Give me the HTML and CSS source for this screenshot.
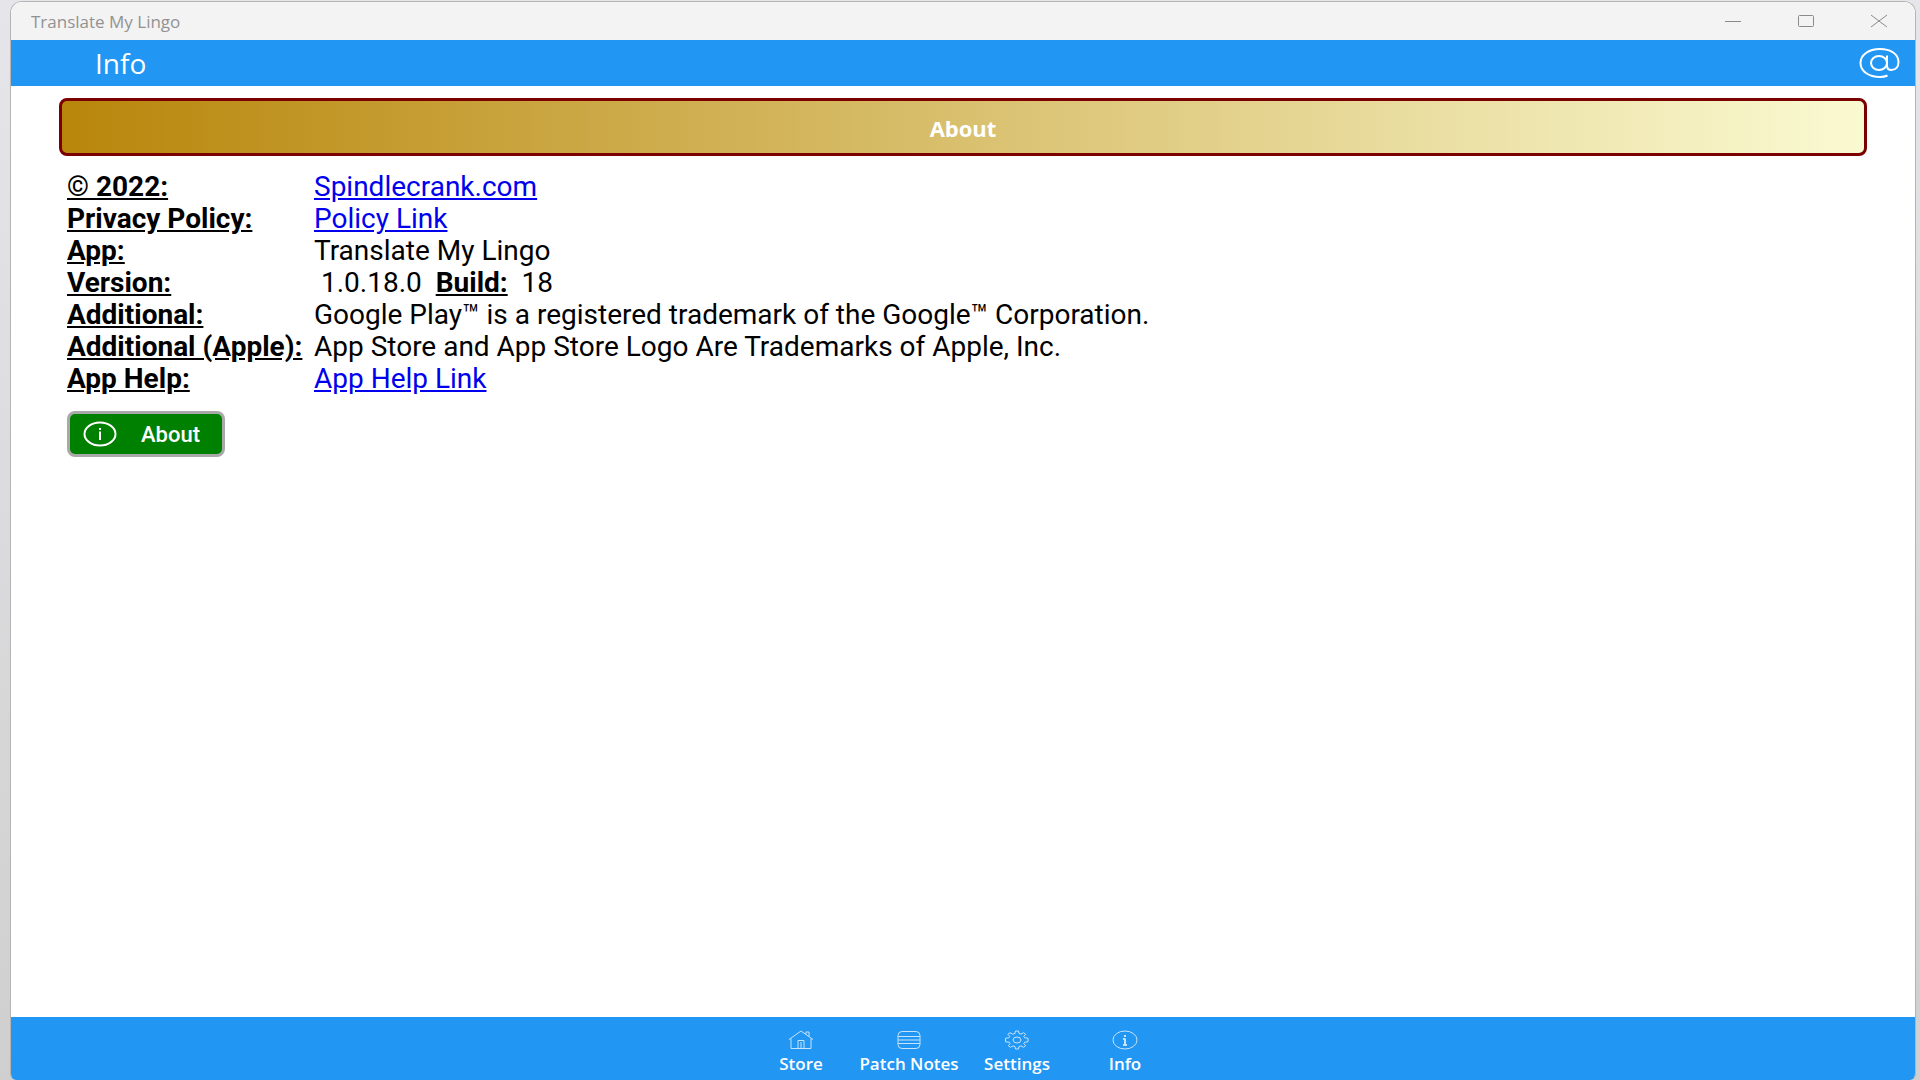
FILE: index.html
```html
<!DOCTYPE html>
<html lang="en">
<head>
    <meta charset="UTF-8">
    <meta name="viewport" content="width=device-width, initial-scale=1.0">
    <title>Translate My Lingo</title>
    <link rel="stylesheet" href="styles.css">
</head>
<body>
    <div class="window">
        <!-- Title bar -->
        <div class="title-bar">
            <span class="title">Translate My Lingo</span>
            <div class="window-controls">
                <button type="button" aria-label="Minimize">
                    <svg width="18" height="14" viewBox="0 0 18 14"><path d="M1 7.500h16"/></svg>
                </button>
                <button type="button" aria-label="Maximize">
                    <svg width="18" height="14" viewBox="0 0 18 14"><rect x="1.500" y="1.500" width="15" height="11" rx="1"/></svg>
                </button>
                <button type="button" aria-label="Close">
                    <svg width="18" height="14" viewBox="0 0 18 14"><path d="M1 1l16 12M17 1L1 13"/></svg>
                </button>
            </div>
        </div>

        <!-- Page header -->
        <header class="header">
            <h1>Info</h1>
            <button type="button" class="contact" aria-label="Contact">
                <svg width="42" height="32" viewBox="0 0 42 32">
                    <ellipse cx="20" cy="16" rx="8" ry="7"/>
                    <path d="M28 8.500v10c0 3.500 2 4.500 4.500 4.500 4.500 0 7-3.500 7-8C39.500 7 31.500 2 21 2 9.500 2 1.500 8 1.500 16S9.500 30 21 30c3 0 5.500-.5 7.500-1.500"/>
                </svg>
            </button>
        </header>

        <main class="content">
            <h2 class="banner">About</h2>

            <table class="info-table">
                <tbody>
                    <tr>
                        <th scope="row">© 2022:</th>
                        <td><a href="#spindlecrank">Spindlecrank.com</a></td>
                    </tr>
                    <tr>
                        <th scope="row">Privacy Policy:</th>
                        <td><a href="#policy">Policy Link</a></td>
                    </tr>
                    <tr>
                        <th scope="row">App:</th>
                        <td>Translate My Lingo</td>
                    </tr>
                    <tr>
                        <th scope="row">Version:</th>
                        <td>&nbsp;1.0.18.0&nbsp; <b class="label">Build:</b>&nbsp; 18</td>
                    </tr>
                    <tr>
                        <th scope="row">Additional:</th>
                        <td>Google Play™ is a registered trademark of the Google™ Corporation.</td>
                    </tr>
                    <tr>
                        <th scope="row">Additional (Apple):</th>
                        <td>App Store and App Store Logo Are Trademarks of Apple, Inc.</td>
                    </tr>
                    <tr>
                        <th scope="row">App Help:</th>
                        <td><a href="#help">App Help Link</a></td>
                    </tr>
                </tbody>
            </table>

            <button type="button" class="about-btn">
                <svg width="34" height="26" viewBox="0 0 34 26">
                    <ellipse cx="17" cy="13" rx="15.500" ry="11.500"/>
                    <path d="M17 10.500v8.500M17 7v2"/>
                </svg>
                About
            </button>
        </main>

        <!-- Bottom tabs -->
        <nav class="tabs">
            <a href="#store">
                <svg width="26" height="20" viewBox="0 0 26 20">
                    <path d="M1 9.500L13 1l12 8.500M3 8.500V18.500h20V8.500M18 4V2h3v4.500M10 18.500v-8h6v8M13 12v6"/>
                </svg>
                Store
            </a>
            <a href="#patch-notes">
                <svg width="26" height="20" viewBox="0 0 26 20">
                    <rect x="2" y="1.500" width="22" height="17" rx="4"/>
                    <path d="M2 6.500h22M2 10h22M2 13.500h22"/>
                </svg>
                Patch Notes
            </a>
            <a href="#settings">
                <svg width="26" height="20" viewBox="0 0 26 20">
                    <ellipse cx="13" cy="10" rx="4" ry="3"/>
                    <path d="M11 3.500L11.500 1h3l.5 2.500 2 .6 2.500-1.400 2.200 1.600-1.900 2 .8 1.500 3.400.4v3.600l-3.400.4-.8 1.500 1.900 2-2.200 1.600-2.500-1.400-2 .6-.5 2.500h-3l-.5-2.500-2-.6-2.500 1.400-2.200-1.600 1.900-2-.8-1.500L1.500 11.800V8.200l3.400-.4.800-1.500-1.900-2L6 2.700l2.500 1.400z"/>
                </svg>
                Settings
            </a>
            <a href="#info" aria-current="page">
                <svg width="26" height="20" viewBox="0 0 26 20">
                    <ellipse cx="13" cy="10" rx="12" ry="9"/>
                    <path class="thick" d="M13 8.500V15M13 5v2M11 9h2M11 15h4"/>
                </svg>
                Info
            </a>
        </nav>
    </div>
</body>
</html>
```
FILE: styles.css
```css
* {
    box-sizing: border-box;
}

body {
    margin: 0;
    padding: 1px 4px 0 10px;
    height: 100vh;
    background: linear-gradient(#e6e6ea, #cfcfcf);
    font-family: "Open Sans", "Noto Sans", sans-serif;
}

button {
    padding: 0;
    border: none;
    background: none;
    cursor: pointer;
}

svg {
    fill: none;
    stroke: currentColor;
}

/* App window */
.window {
    display: flex;
    flex-direction: column;
    height: 100%;
    border: 1px solid #b4b4b4;
    border-bottom: none;
    border-radius: 12px 12px 6px 6px;
    background-color: #fff;
    overflow: hidden;
}

/* Title bar */
.title-bar {
    display: flex;
    align-items: center;
    justify-content: space-between;
    height: 38px;
    padding-left: 20px;
    background-color: #f3f3f3;
    color: #929292;
    flex-shrink: 0;
}

.title {
    font-size: 17px;
}

.window-controls {
    display: flex;
    height: 100%;
}

.window-controls button {
    display: flex;
    align-items: center;
    justify-content: center;
    width: 73px;
    color: #8a8a8a;
}

/* Blue header */
.header {
    display: flex;
    align-items: center;
    justify-content: space-between;
    height: 46px;
    padding: 0 14px 0 84px;
    background-color: #2196f3;
    color: #fff;
    flex-shrink: 0;
}

.header h1 {
    margin: 0;
    font-size: 28px;
    font-weight: normal;
}

.contact {
    display: flex;
    color: #fff;
}

.contact svg {
    stroke-width: 2;
}

/* Page content */
.content {
    flex: 1;
    padding: 12px 48px;
    font-family: Roboto, sans-serif;
}

.banner {
    display: flex;
    align-items: center;
    justify-content: center;
    height: 58px;
    margin: 0 0 15px;
    padding-top: 2px;
    border: 3px solid #7b0000;
    border-radius: 8px;
    background: linear-gradient(to right, #b8860b, #fafad2);
    color: #fff;
    font-family: "Open Sans", sans-serif;
    font-size: 22px;
    font-weight: bold;
}

.info-table {
    margin-left: 8px;
    border-collapse: collapse;
    color: #000;
    font-size: 28px;
    line-height: 32px;
}

.info-table th,
.info-table td {
    padding: 0;
    text-align: left;
    white-space: nowrap;
}

.info-table th {
    width: 247px;
}

.info-table th,
.label {
    font-weight: bold;
    text-decoration: underline;
}

.info-table a {
    color: #0000ee;
}

/* Green button under the table */
.about-btn {
    display: flex;
    align-items: center;
    gap: 24px;
    height: 46px;
    margin: 16px 0 0 8px;
    padding: 0 22px 0 13px;
    border: 3px solid #a9a9a9;
    border-radius: 8px;
    background-color: #008000;
    color: #fff;
    font-family: Roboto, sans-serif;
    font-size: 22px;
    font-weight: 500;
}

.about-btn svg {
    stroke-width: 2;
}

/* Bottom tabs */
.tabs {
    display: flex;
    justify-content: center;
    height: 63px;
    background-color: #2196f3;
    flex-shrink: 0;
}

.tabs a {
    display: flex;
    flex-direction: column;
    align-items: center;
    gap: 4px;
    width: 108px;
    padding-top: 13px;
    color: #fff;
    font-size: 17px;
    font-weight: 600;
    line-height: 20px;
    text-decoration: none;
    white-space: nowrap;
}

.tabs svg {
    opacity: 0.75;
}

.tabs .thick {
    stroke-width: 2;
}
```
